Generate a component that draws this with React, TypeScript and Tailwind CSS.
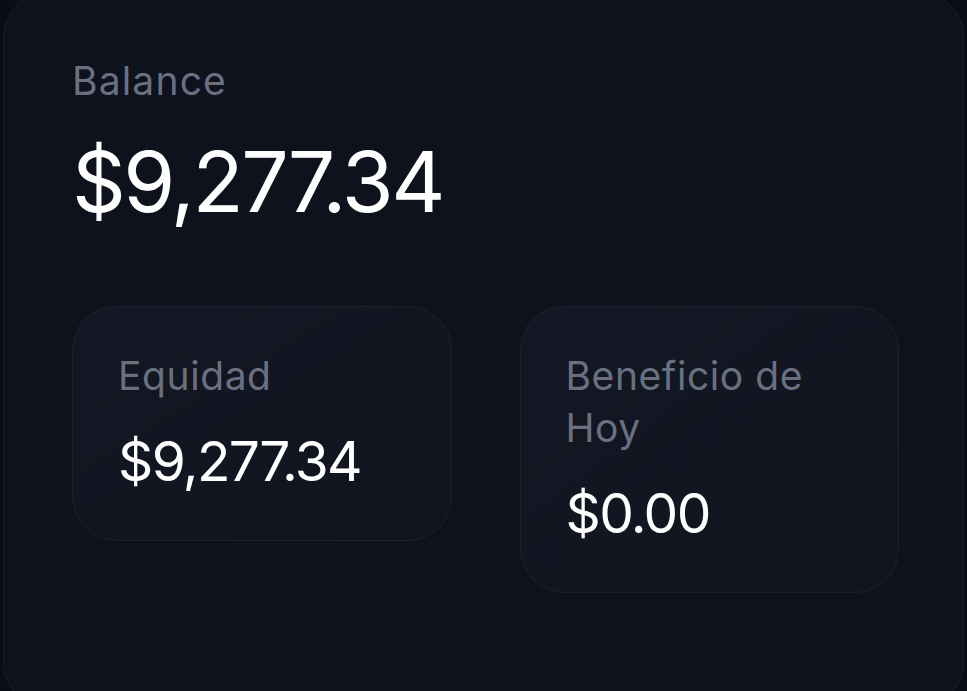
import React from "react";

function StatCard({ label, value }: { label: string; value: string }) {
  return (
    <div className="rounded-[44px] border border-[#1c212d] bg-gradient-to-br from-[#131824] to-[#10141f] px-[45px] pt-[43px] pb-[51px]">
      <div className="text-[39px] leading-[52px] text-[#6b7080] tracking-[0.015em]">{label}</div>
      <div className="mt-[32px] text-[55px] leading-none text-white tracking-[-0.03em]">{value}</div>
    </div>
  );
}

export default function App() {
  return (
    <div
      className="h-[691px] overflow-hidden bg-[#0a0d16]"
      style={{ fontFamily: "Inter, 'Noto Sans', sans-serif" }}
    >
      <div className="mx-[3px] -mt-[10px] h-[720px] rounded-[48px] border border-[#1b1f2b] bg-[#0e121d] pl-[68px] pr-[64px] pt-[64px]">
        <div className="text-[39px] leading-[52px] text-[#6b7080] tracking-[0.03em]">Balance</div>
        <div className="mt-[33px] text-[84px] leading-none text-white tracking-[-0.03em]">$9,277.34</div>
        <div className="mt-[82px] grid grid-cols-2 items-start gap-[68px]">
          <StatCard label="Equidad" value="$9,277.34" />
          <StatCard label="Beneficio de Hoy" value="$0.00" />
        </div>
      </div>
    </div>
  );
}
